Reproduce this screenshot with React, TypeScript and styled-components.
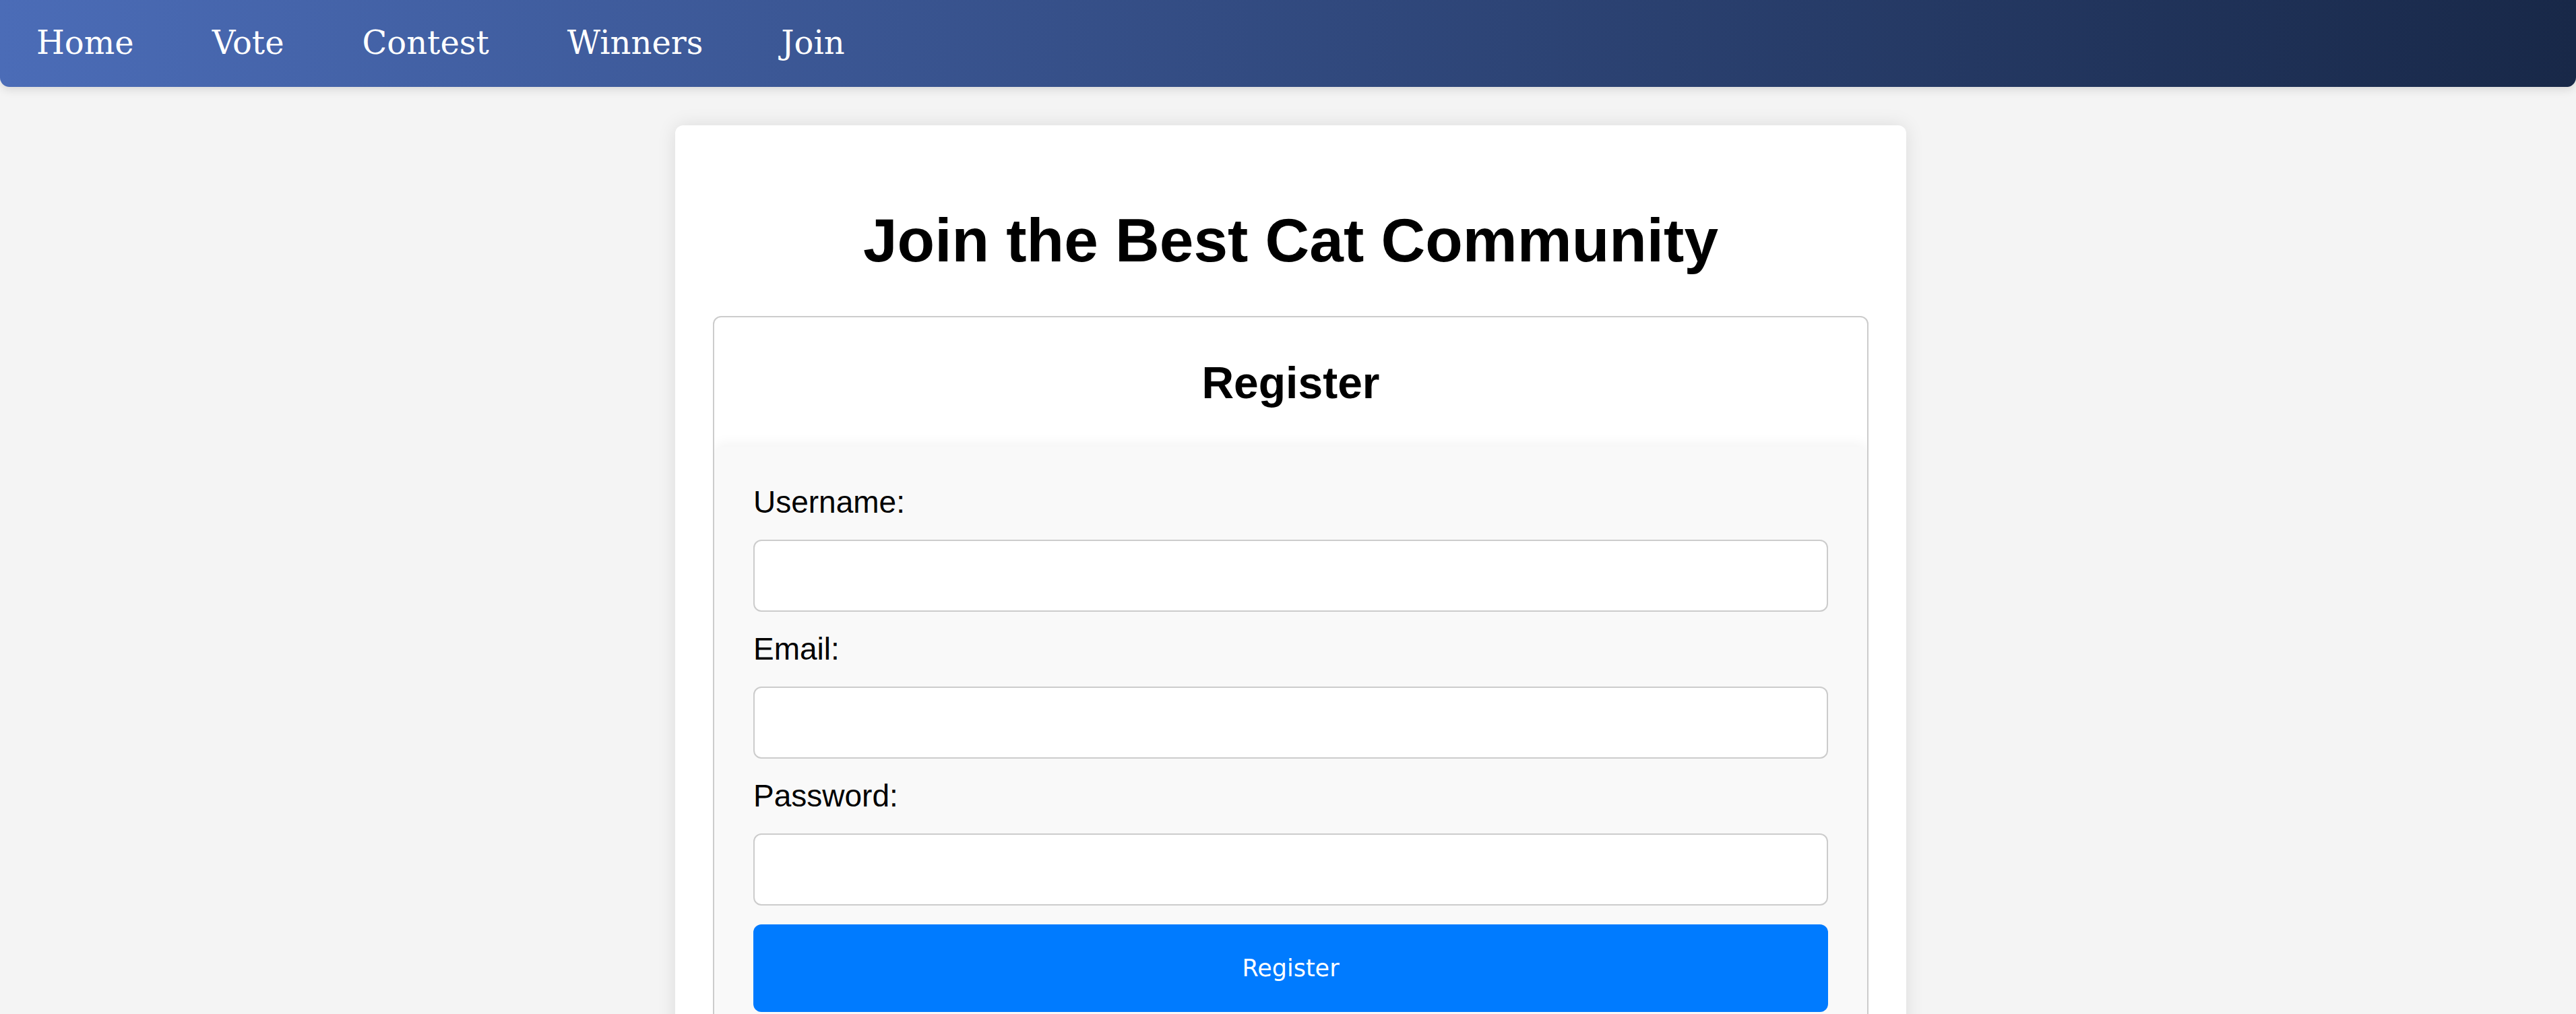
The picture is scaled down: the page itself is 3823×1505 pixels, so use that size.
import React from "react";
import styled, { createGlobalStyle } from "styled-components";

const GlobalStyle = createGlobalStyle`
  * {
    box-sizing: border-box;
  }

  body {
    margin: 0;
    background: #f4f4f4;
    font-family: "Liberation Sans", Arial, sans-serif;
    color: #000;
  }
`;

const NavBar = styled.nav`
  display: flex;
  align-items: center;
  gap: 116px;
  height: 129px;
  padding-left: 54px;
  background: linear-gradient(to right, #4b6cb7, #182848);
  border-radius: 0 0 14px 14px;
  box-shadow: 0 4px 14px rgba(0, 0, 0, 0.12);
`;

const NavLink = styled.a`
  font-family: "DejaVu Serif", serif;
  font-size: 48px;
  color: #fff;
  text-decoration: none;
  line-height: 1;
  padding-bottom: 4px;
`;

const Page = styled.div`
  padding-left: 8px;
`;

const Card = styled.main`
  width: 1827px;
  margin: 57px auto 0;
  padding: 56px 56px;
  background: #fff;
  border-radius: 12px;
  box-shadow: 0 0 28px rgba(0, 0, 0, 0.1);
`;

const Title = styled.h1`
  margin: 63px 0 60px;
  font-size: 91px;
  font-weight: 700;
  text-align: center;
`;

const RegisterBox = styled.section`
  border: 2px solid #ccc;
  border-radius: 12px;
  overflow: hidden;
`;

const BoxTitle = styled.h2`
  margin: 59px 0 57px;
  font-size: 66px;
  font-weight: 700;
  text-align: center;
`;

const FormPanel = styled.form`
  display: flex;
  flex-direction: column;
  padding: 55px 58px 60px;
  background: #f9f9f9;
  border-radius: 12px;
  box-shadow: 0 -4px 20px rgba(0, 0, 0, 0.05);
`;

const Label = styled.label`
  display: block;
  font-size: 46px;
  margin-bottom: 29px;
`;

const Input = styled.input`
  display: block;
  width: 100%;
  height: 107px;
  margin-bottom: 28px;
  padding: 0 24px;
  border: 2px solid #ccc;
  border-radius: 12px;
  background: #fff;
  font-size: 40px;
  font-family: "Liberation Sans", Arial, sans-serif;
`;

const SubmitButton = styled.button`
  width: 100%;
  height: 130px;
  border: none;
  border-radius: 12px;
  background: #007bff;
  color: #fff;
  font-family: "DejaVu Sans", sans-serif;
  font-size: 35px;
  cursor: pointer;
`;

const navItems = ["Home", "Vote", "Contest", "Winners", "Join"];

const fields = [
  { id: "username", label: "Username:", type: "text" },
  { id: "email", label: "Email:", type: "email" },
  { id: "password", label: "Password:", type: "password" },
];

const App: React.FC = () => {
  return (
    <>
      <GlobalStyle />
      <NavBar>
        {navItems.map((item) => (
          <NavLink key={item} href="#">
            {item}
          </NavLink>
        ))}
      </NavBar>
      <Page>
        <Card>
          <Title>Join the Best Cat Community</Title>
          <RegisterBox>
            <BoxTitle>Register</BoxTitle>
            <FormPanel onSubmit={(e) => e.preventDefault()}>
              {fields.map((f) => (
                <React.Fragment key={f.id}>
                  <Label htmlFor={f.id}>{f.label}</Label>
                  <Input id={f.id} type={f.type} />
                </React.Fragment>
              ))}
              <SubmitButton type="submit">Register</SubmitButton>
            </FormPanel>
          </RegisterBox>
        </Card>
      </Page>
    </>
  );
};

export default App;
